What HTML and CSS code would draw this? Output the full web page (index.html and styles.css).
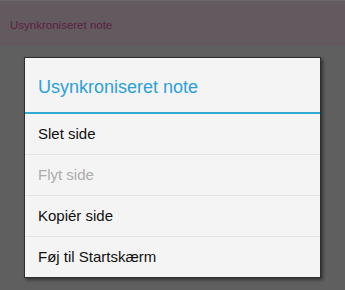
FILE: index.html
```html
<!doctype html>
<html lang="da">
<head>
	<meta charset="UTF-8"/>
	<title>Usynkroniseret note</title>
	<link rel="stylesheet" href="styles.css">
</head>
<body>
	<div class="topBar">Usynkroniseret note</div>
	<div class="dialog">
		<div class="dlgTitle">Usynkroniseret note</div>
		<ul class="menu">
			<li><a href="#">Slet side</a></li>
			<li><a href="#" class="disabled">Flyt side</a></li>
			<li><a href="#">Kopiér side</a></li>
			<li><a href="#">Føj til Startskærm</a></li>
		</ul>
	</div>
</body>
</html>
```

FILE: styles.css
```css
*				{ padding:0; margin:0; box-sizing:border-box; }
ul				{ list-style-type:none; }
html, body		{ height:100%; }
body			{ background:#5f5f5f; font-family:"Liberation Sans", Arial, sans-serif; overflow:hidden; }
.topBar			{ height:46px; line-height:48px; padding-left:10px; background:#625a5e; border-top:1px solid #6a6a6a; color:#5a2043; font-size:11.5px; }
.dialog			{ width:297px; margin:11px 0 0 24px; background:#f4f4f4; border:1px solid #2e2e2e; box-shadow:2px 2px 3px rgba(0,0,0,0.45); }
.dlgTitle		{ height:56px; line-height:58px; padding-left:13px; font-size:18px; color:#2ba1d9; border-bottom:2px solid #35a9d6; }
.menu li		{ border-top:1px solid #e4e4e4; }
.menu li:first-child	{ border-top:none; }
.menu li a		{ display:block; height:40px; line-height:40px; padding-left:13px; font-size:15px; color:#111; text-decoration:none; }
.menu li a.disabled		{ color:#acacac; }
```
